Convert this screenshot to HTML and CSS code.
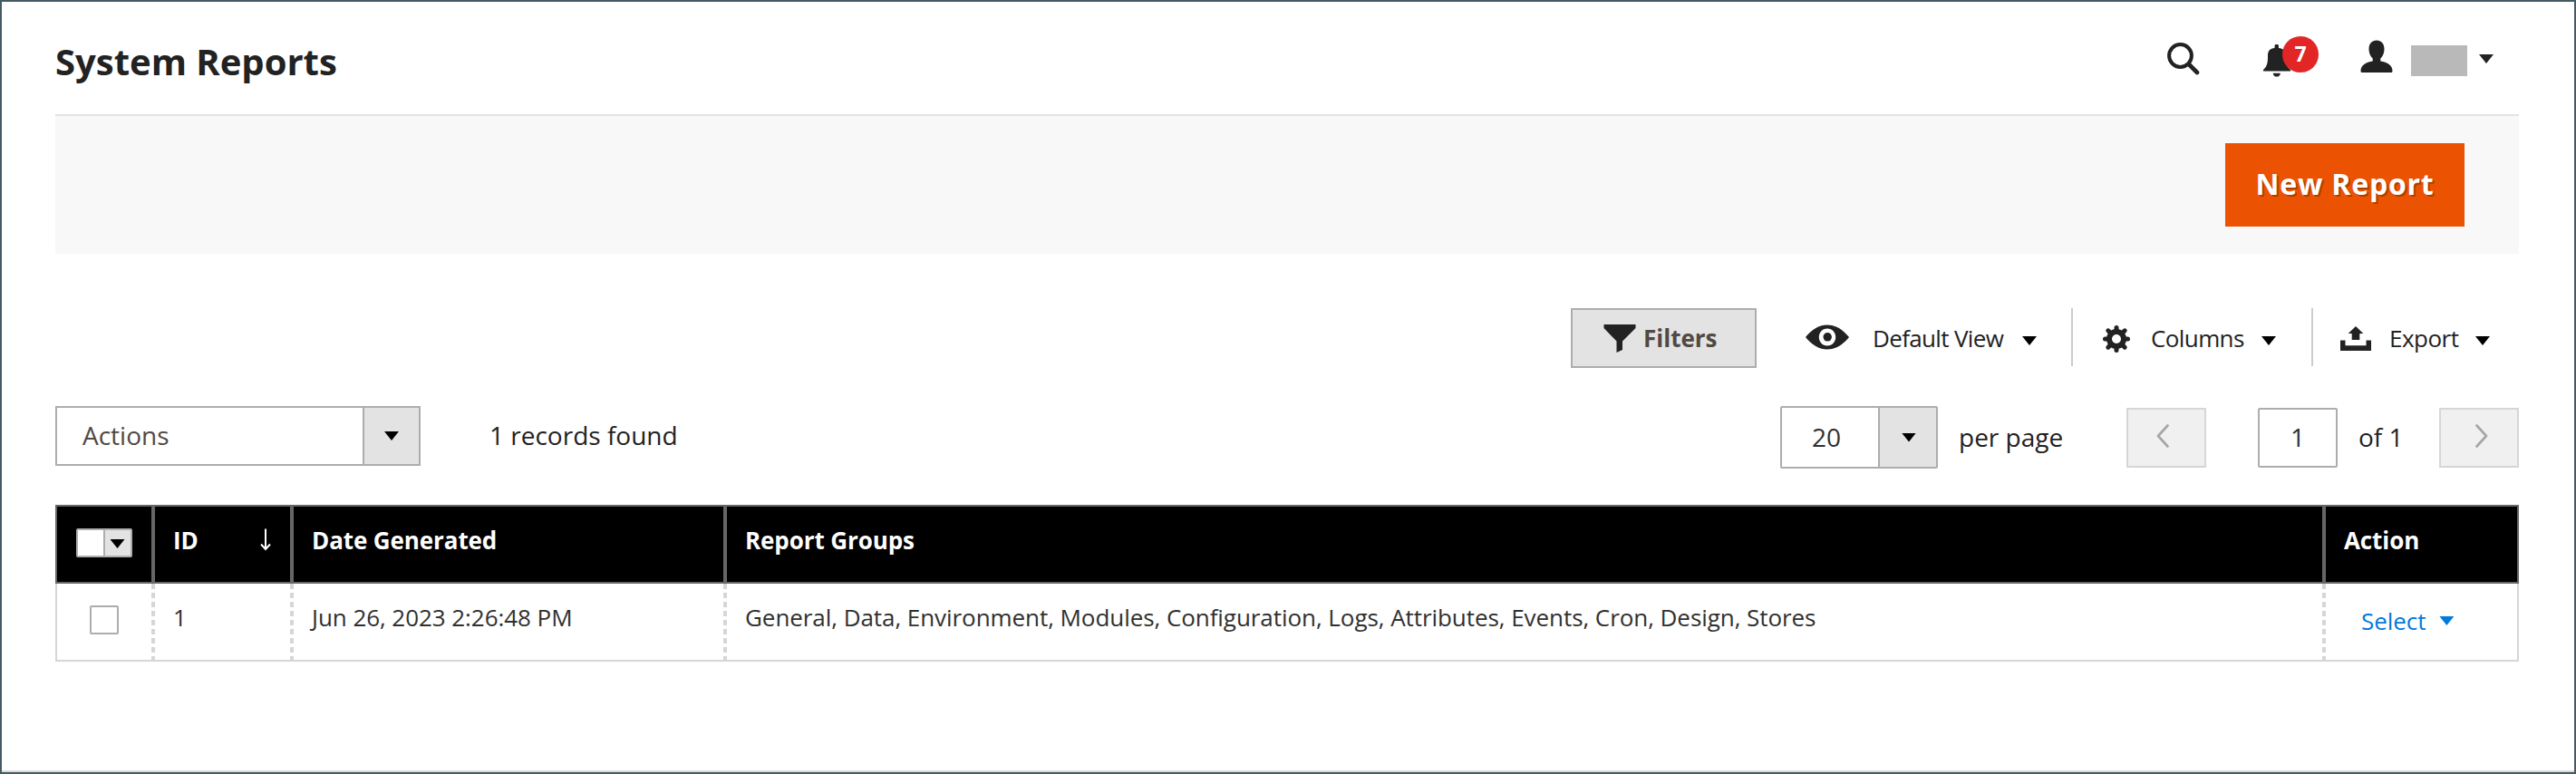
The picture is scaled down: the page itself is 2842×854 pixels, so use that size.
FILE: index.html
```
<!DOCTYPE html>
<html lang="en">
<head>
<meta charset="utf-8">
<title>System Reports</title>
<link rel="stylesheet" href="styles.css">
</head>
<body>
<div class="page">
  <header class="header">
    <h1 class="title">System Reports</h1>
    <div class="header-tools">
      <svg class="icon-search" width="36" height="36" viewBox="0 0 36 36"><circle cx="14.5" cy="14.5" r="12.4" fill="none" stroke="#222" stroke-width="4"/><path d="M24 24l9 9" stroke="#222" stroke-width="4.6" stroke-linecap="round"/></svg>
      <div class="notifications">
        <svg width="30" height="36" viewBox="0 0 30 36"><path fill="#222" d="M12.5 4V2a2 2 0 0 1 4.500 0v2c5 .5 7.500 3 7.500 8 0 9 1 12 5.500 16v1.500H0V28c4.500-4 5-8 5-16 0-5 2.500-7.500 7.500-8zM10.700 31.700h8.200c-.3 5.200-7.900 5.200-8.200 0z"/></svg>
        <span class="badge">7</span>
      </div>
      <svg class="icon-user" width="36" height="37" viewBox="0 0 36 37"><path fill="#222" d="M18 .5c5 0 8.500 3.700 8.500 9.500 0 4.700-1.600 8-4.200 10.600v3c7.600 1.200 13.200 4.800 13.200 10.400 0 1.500-.4 2-1.800 2H2.300C.9 36 .5 35.500.5 34c0-5.600 5.600-9.200 13.200-10.400v-3C11.100 18 9.500 14.700 9.500 10 9.500 4.200 13 .5 18 .5z"/></svg>
      <span class="user-name"></span>
      <i class="caret caret-user"></i>
    </div>
  </header>
  <div class="page-actions"><button class="primary">New Report</button></div>

  <div class="toolbar">
    <button class="filters">
      <svg width="36" height="31" viewBox="0 0 36 31"><path fill="#222" d="M.5 0h35v4L21 18.500v9.500L14.500 31V18.500L.5 4z"/></svg>
      <span>Filters</span>
    </button>
    <div class="tool tool-view">
      <svg width="48" height="28" viewBox="0 0 48 28"><path fill="#222" fill-rule="evenodd" d="M0 14C6 6.500 14 .5 24 .5s18 6 24 13.500c-6 7.500-14 13.500-24 13.500S6 21.500 0 14zM24 4.500c-5.300 0-9.200 4.200-9.200 9.500s3.900 9.500 9.200 9.500 9.200-4.200 9.200-9.500-3.900-9.500-9.200-9.500z"/><ellipse cx="24.200" cy="13.800" rx="4.700" ry="4.800" fill="#222"/></svg>
      <span class="tool-label">Default View</span><i class="caret"></i>
    </div>
    <div class="tool tool-columns">
      <svg width="30" height="30" viewBox="-15 -15 30 30"><g stroke="#222" stroke-width="5" stroke-linecap="round"><path d="M0-12.500V-9M0 9v3.500M-12.500 0H-9M9 0h3.500M-9.200-9.200L-7-7M7 7l2.200 2.200M-9.200 9.200L-7 7M7-7l2.200-2.200"/></g><circle r="8" fill="none" stroke="#222" stroke-width="6"/></svg>
      <span class="tool-label">Columns</span><i class="caret"></i>
    </div>
    <div class="tool tool-export">
      <svg width="34" height="27" viewBox="0 0 34 27"><path fill="#222" d="M0 15.500h5.500v5.800h23v-5.800H34V27H0zM17 0l8.300 8h-4v7h-8.600V8h-4z"/></svg>
      <span class="tool-label">Export</span><i class="caret"></i>
    </div>
  </div>

  <div class="controls">
    <div class="select select-actions"><span class="select-text">Actions</span><span class="select-arrow"><i class="caret"></i></span></div>
    <span class="records">1 records found</span>
    <div class="pager">
      <div class="select select-size"><span class="select-text">20</span><span class="select-arrow"><i class="caret"></i></span></div>
      <span class="per-page">per page</span>
      <button class="step step-prev"><svg width="14" height="26" viewBox="0 0 14 26"><path d="M12.500 1.500L2 13l10.500 11.500" fill="none" stroke="#a8a5a2" stroke-width="2.600" stroke-linecap="round" stroke-linejoin="round"/></svg></button>
      <span class="page-input">1</span>
      <span class="page-total">of 1</span>
      <button class="step"><svg width="14" height="26" viewBox="0 0 14 26"><path d="M1.500 1.500L12 13 1.500 24.500" fill="none" stroke="#a8a5a2" stroke-width="2.600" stroke-linecap="round" stroke-linejoin="round"/></svg></button>
    </div>
  </div>

  <div class="grid">
    <div class="row head">
      <div class="cell cell-check"><span class="multicheck"><i class="multicheck-box"></i><i class="multicheck-arrow"><i class="caret"></i></i></span></div>
      <div class="cell cell-id"><span>ID</span><svg width="12" height="25" viewBox="0 0 12 25"><path d="M6 .5V23M1 17.500l5 5.500 5-5.500" fill="none" stroke="#fff" stroke-width="2"/></svg></div>
      <div class="cell">Date Generated</div>
      <div class="cell">Report Groups</div>
      <div class="cell">Action</div>
    </div>
    <div class="row body">
      <div class="cell cell-check"><span class="checkbox"></span></div>
      <div class="cell">1</div>
      <div class="cell">Jun 26, 2023 2:26:48 PM</div>
      <div class="cell">General, Data, Environment, Modules, Configuration, Logs, Attributes, Events, Cron, Design, Stores</div>
      <div class="cell cell-action"><span>Select</span><i class="caret"></i></div>
    </div>
  </div>
</div>
</body>
</html>
```
FILE: styles.css
```
* { box-sizing: border-box; }
body { margin: 0; font-family: "Open Sans", "Noto Sans", sans-serif; color: #222; background: #fff; }
button { font-family: inherit; margin: 0; padding: 0; }
svg { display: block; flex: none; }
.page {
  height: 854px;
  padding: 0 61px 0 59px;
  border: 2px solid #465a65;
  box-shadow: inset 0 -2px #dadada;
  background: #fff;
  white-space: nowrap;
}
.caret {
  display: block;
  flex: none;
  width: 16px;
  height: 10px;
  background: #000;
  clip-path: polygon(0 0, 100% 0, 50% 100%);
}

/* header */
.header { display: flex; justify-content: space-between; height: 126px; border-bottom: 2px solid #e3e3e3; }
.title { margin: 38px 0 0; font-size: 40px; line-height: 55px; font-weight: 700; }
.header-tools { display: flex; align-items: flex-start; padding-right: 28px; }
.icon-search { margin-top: 45px; margin-right: 70px; }
.notifications { position: relative; width: 62px; margin-top: 47px; }
.badge {
  position: absolute;
  left: 21px;
  top: -9px;
  width: 40px;
  height: 40px;
  border-radius: 50%;
  background: #e22626;
  color: #fff;
  font-size: 23px;
  line-height: 39px;
  font-weight: 700;
  text-align: center;
}
.icon-user { margin-top: 42px; margin-left: 45px; }
.user-name { width: 62px; height: 34px; margin: 48px 0 0 20px; background: #b9b9b9; }
.caret-user { margin: 58px 0 0 13px; background: #222; }

.page-actions { display: flex; justify-content: flex-end; height: 152px; padding: 30px 60px 0 0; background: #f8f8f8; }
.primary {
  width: 264px;
  height: 92px;
  padding-bottom: 3px;
  border: 0;
  background: #eb5202;
  color: #fff;
  font-size: 32px;
  line-height: 43px;
  font-weight: 700;
  letter-spacing: .025em;
  text-shadow: 2px 2px 0 rgba(0, 0, 0, .25);
}

/* view tools */
.toolbar { display: flex; justify-content: flex-end; height: 66px; margin-top: 60px; }
.filters {
  display: flex;
  align-items: flex-start;
  gap: 8px;
  width: 205px;
  padding: 16px 0 0 34px;
  border: 2px solid #adadad;
  background: #e3e3e3;
  color: #514943;
  font-size: 26px;
  line-height: 30px;
  font-weight: 700;
}
.tool { display: flex; align-items: center; height: 64px; font-size: 26px; line-height: 36px; }
.tool .caret { margin-top: 8px; }
.tool-label { margin-top: 2px; }
.tool-view { width: 347px; padding-left: 54px; }
.tool-view .tool-label { width: 165px; margin-left: 26px; letter-spacing: -.65px; }
.tool-columns { width: 265px; padding-left: 33px; border-left: 2px solid #ccc; }
.tool-columns svg { margin-top: 4px; }
.tool-columns .tool-label { width: 122px; margin-left: 23px; letter-spacing: -.6px; }
.tool-export { width: 229px; padding-left: 30px; border-left: 2px solid #ccc; }
.tool-export svg { margin-top: 3px; }
.tool-export .tool-label { width: 95px; margin-left: 20px; letter-spacing: -.5px; }

/* mass actions and paging */
.controls { display: flex; align-items: flex-start; height: 69px; margin-top: 42px; font-size: 28px; line-height: 38px; }
.select { display: flex; border: 2px solid #adadad; }
.select-text { flex: 1; }
.select-arrow { display: flex; align-items: center; justify-content: center; border-left: 2px solid #adadad; background: #e3e3e3; }
.select-actions { width: 403px; height: 66px; color: #514943; }
.select-actions .select-text { padding: 11px 0 0 28px; }
.select-actions .select-arrow { width: 62px; }
.records { margin: 13px 0 0 76px; }
.pager { display: flex; margin-left: auto; }
.select-size { width: 174px; height: 69px; border-radius: 2px; color: #303030; }
.select-size .select-text { padding: 13px 0 0 33px; }
.select-size .select-arrow { width: 64px; padding-left: 2px; }
.per-page { width: 185px; margin: 15px 0 0 23px; }
.step { display: flex; justify-content: center; width: 88px; height: 66px; margin-top: 2px; padding-top: 16px; border: 2px solid #d6d6d6; background: #f0f0f0; }
.step-prev { padding-right: 8px; }
.step:last-child { padding-left: 6px; }
.page-input { width: 88px; height: 66px; margin: 2px 0 0 57px; padding-top: 11px; border: 2px solid #adadad; border-radius: 2px; color: #303030; text-align: center; }
.page-total { width: 89px; margin: 15px 0 0 23px; }

/* data grid */
.grid { margin-top: 40px; }
.row { display: grid; grid-template-columns: 104px 153px 478px 1764px 1fr; font-size: 26px; line-height: 36px; }
.head { height: 87px; border: 2px solid #666; background: #000; color: #fff; font-weight: 700; letter-spacing: -.1px; }
.body { height: 86px; border: 2px solid #d6d6d6; border-top: 0; color: #303030; letter-spacing: -.06px; }
.cell { padding: 19px 0 0 20px; }
.head .cell + .cell { border-left: 4px solid #666; }
.body .cell + .cell {
  background: repeating-linear-gradient(#d6d6d6 0 6px, transparent 6px 10px) 0 0 / 4px 100% no-repeat;
  padding-left: 24px;
}
.row .cell-check { display: flex; justify-content: center; align-items: flex-start; padding: 24px 0 0; }
.head .cell-check { padding-right: 1px; }
.head .cell-id { display: flex; justify-content: space-between; padding-right: 21px; }
.cell-id svg { margin-top: 5px; }
.multicheck { display: flex; width: 62px; height: 32px; border: 2px solid #adadad; border-radius: 2px; background: #fff; }
.multicheck-box { width: 28px; }
.multicheck-arrow { display: flex; flex: 1; align-items: center; justify-content: center; border-left: 2px solid #adadad; background: #e3e3e3; }
.multicheck-arrow .caret { margin-top: 2px; }
.checkbox { width: 32px; height: 32px; border: 2px solid #adadad; border-radius: 2px; background: #fff; }
.body .cell.cell-action { display: flex; gap: 15px; padding: 23px 0 0 43px; color: #007bdb; }
.cell-action .caret { margin-top: 13px; background: #007bdb; }
```
